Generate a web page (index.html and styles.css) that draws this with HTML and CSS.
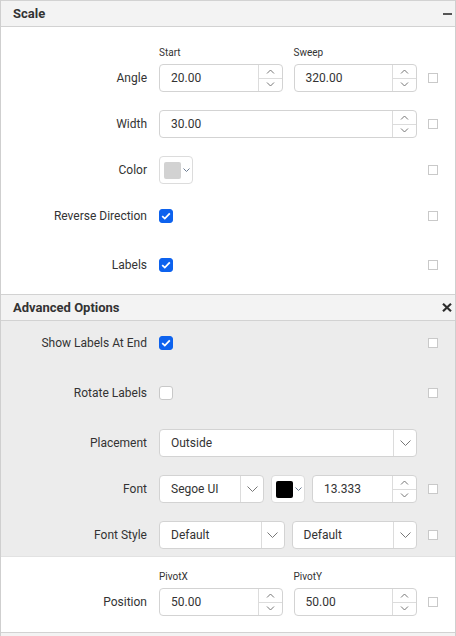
FILE: index.html
```html
<!DOCTYPE html>
<html>
<head>
<meta charset="utf-8">
<link rel="stylesheet" href="styles.css">
</head>
<body>
<div class="panel">
  <div class="sec-head">
    <span class="sec-title">Scale</span>
    <span class="icon-minus"></span>
  </div>
  <div class="sec-body">
    <div class="row row--sub">
      <div class="sublabels pair"><span>Start</span><span>Sweep</span></div>
      <div class="label">Angle</div>
      <div class="ctrl pair">
        <div class="num"><span class="val">20.00</span><span class="spin"><span class="up"><svg width="9" height="5" viewBox="0 0 9 5"><path d="M1 4.5L4.5 1L8 4.5" fill="none" stroke="#777" stroke-width="1"/></svg></span><span class="dn"><svg width="9" height="5" viewBox="0 0 9 5"><path d="M1 0.5L4.5 4L8 0.5" fill="none" stroke="#777" stroke-width="1"/></svg></span></span></div>
        <div class="num"><span class="val">320.00</span><span class="spin"><span class="up"><svg width="9" height="5" viewBox="0 0 9 5"><path d="M1 4.5L4.5 1L8 4.5" fill="none" stroke="#777" stroke-width="1"/></svg></span><span class="dn"><svg width="9" height="5" viewBox="0 0 9 5"><path d="M1 0.5L4.5 4L8 0.5" fill="none" stroke="#777" stroke-width="1"/></svg></span></span></div>
      </div>
      <div class="flag"></div>
    </div>
    <div class="row">
      <div class="label">Width</div>
      <div class="ctrl">
        <div class="num"><span class="val">30.00</span><span class="spin"><span class="up"><svg width="9" height="5" viewBox="0 0 9 5"><path d="M1 4.5L4.5 1L8 4.5" fill="none" stroke="#777" stroke-width="1"/></svg></span><span class="dn"><svg width="9" height="5" viewBox="0 0 9 5"><path d="M1 0.5L4.5 4L8 0.5" fill="none" stroke="#777" stroke-width="1"/></svg></span></span></div>
      </div>
      <div class="flag"></div>
    </div>
    <div class="row">
      <div class="label">Color</div>
      <div class="ctrl">
        <div class="colorpick"><span class="swatch swatch--gray"></span><svg width="7" height="4" viewBox="0 0 7 4"><path d="M0.5 0.5L3.5 3.5L6.5 0.5" fill="none" stroke="#6a7a90" stroke-width="1"/></svg></div>
      </div>
      <div class="flag"></div>
    </div>
    <div class="row">
      <div class="label">Reverse Direction</div>
      <div class="ctrl">
        <span class="check check--on"><svg width="10" height="8" viewBox="0 0 10 8"><path d="M1.2 4.2L3.8 6.6L8.8 1.4" fill="none" stroke="#fff" stroke-width="1.8"/></svg></span>
      </div>
      <div class="flag"></div>
    </div>
    <div class="row row--spaced">
      <div class="label">Labels</div>
      <div class="ctrl">
        <span class="check check--on"><svg width="10" height="8" viewBox="0 0 10 8"><path d="M1.2 4.2L3.8 6.6L8.8 1.4" fill="none" stroke="#fff" stroke-width="1.8"/></svg></span>
      </div>
      <div class="flag"></div>
    </div>
  </div>

  <div class="sec-head">
    <span class="sec-title">Advanced Options</span>
    <svg class="icon-close" width="10" height="9" viewBox="0 0 10 9"><path d="M1 0.8L9 8.2M9 0.8L1 8.2" stroke="#2d2d2d" stroke-width="2.2"/></svg>
  </div>
  <div class="sec-body sec-body--adv">
    <div class="row">
      <div class="label">Show Labels At End</div>
      <div class="ctrl">
        <span class="check check--on"><svg width="10" height="8" viewBox="0 0 10 8"><path d="M1.2 4.2L3.8 6.6L8.8 1.4" fill="none" stroke="#fff" stroke-width="1.8"/></svg></span>
      </div>
      <div class="flag"></div>
    </div>
    <div class="row row--spaced">
      <div class="label">Rotate Labels</div>
      <div class="ctrl">
        <span class="check"></span>
      </div>
      <div class="flag"></div>
    </div>
    <div class="row row--spaced">
      <div class="label">Placement</div>
      <div class="ctrl">
        <div class="select"><span class="val">Outside</span><span class="arrow"><svg width="11" height="6" viewBox="0 0 11 6"><path d="M0.5 0.5L5.5 5.5L10.5 0.5" fill="none" stroke="#777" stroke-width="1"/></svg></span></div>
      </div>
    </div>
    <div class="row">
      <div class="label">Font</div>
      <div class="ctrl font-grid">
        <div class="select"><span class="val">Segoe UI</span><span class="arrow"><svg width="11" height="6" viewBox="0 0 11 6"><path d="M0.5 0.5L5.5 5.5L10.5 0.5" fill="none" stroke="#777" stroke-width="1"/></svg></span></div>
        <div class="colorpick"><span class="swatch swatch--black"></span><svg width="7" height="4" viewBox="0 0 7 4"><path d="M0.5 0.5L3.5 3.5L6.5 0.5" fill="none" stroke="#6a7a90" stroke-width="1"/></svg></div>
        <div class="num"><span class="val">13.333</span><span class="spin"><span class="up"><svg width="9" height="5" viewBox="0 0 9 5"><path d="M1 4.5L4.5 1L8 4.5" fill="none" stroke="#777" stroke-width="1"/></svg></span><span class="dn"><svg width="9" height="5" viewBox="0 0 9 5"><path d="M1 0.5L4.5 4L8 0.5" fill="none" stroke="#777" stroke-width="1"/></svg></span></span></div>
      </div>
      <div class="flag"></div>
    </div>
    <div class="row">
      <div class="label">Font Style</div>
      <div class="ctrl style-grid">
        <div class="select"><span class="val">Default</span><span class="arrow"><svg width="11" height="6" viewBox="0 0 11 6"><path d="M0.5 0.5L5.5 5.5L10.5 0.5" fill="none" stroke="#777" stroke-width="1"/></svg></span></div>
        <div class="select"><span class="val">Default</span><span class="arrow"><svg width="11" height="6" viewBox="0 0 11 6"><path d="M0.5 0.5L5.5 5.5L10.5 0.5" fill="none" stroke="#777" stroke-width="1"/></svg></span></div>
      </div>
      <div class="flag"></div>
    </div>
  </div>

  <div class="sec-body sec-body--pos">
    <div class="row row--sub">
      <div class="sublabels pair"><span>PivotX</span><span>PivotY</span></div>
      <div class="label">Position</div>
      <div class="ctrl pair">
        <div class="num"><span class="val">50.00</span><span class="spin"><span class="up"><svg width="9" height="5" viewBox="0 0 9 5"><path d="M1 4.5L4.5 1L8 4.5" fill="none" stroke="#777" stroke-width="1"/></svg></span><span class="dn"><svg width="9" height="5" viewBox="0 0 9 5"><path d="M1 0.5L4.5 4L8 0.5" fill="none" stroke="#777" stroke-width="1"/></svg></span></span></div>
        <div class="num"><span class="val">50.00</span><span class="spin"><span class="up"><svg width="9" height="5" viewBox="0 0 9 5"><path d="M1 4.5L4.5 1L8 4.5" fill="none" stroke="#777" stroke-width="1"/></svg></span><span class="dn"><svg width="9" height="5" viewBox="0 0 9 5"><path d="M1 0.5L4.5 4L8 0.5" fill="none" stroke="#777" stroke-width="1"/></svg></span></span></div>
      </div>
      <div class="flag"></div>
    </div>
  </div>
  <div class="sec-head sec-head--next"></div>
</div>
</body>
</html>
```

FILE: styles.css
```css
* { box-sizing: border-box; }
html, body { margin: 0; padding: 0; background: #fff; }
body {
  font-family: Roboto, "Liberation Sans", Arial, sans-serif;
  font-size: 12px;
  color: #333;
}
.panel {
  width: 456px;
  height: 636px;
  overflow: hidden;
  border-left: 1px solid #cfcfcf;
  border-right: 1px solid #cfcfcf;
}
.sec-head {
  height: 27px;
  border-top: 1px solid #d2d2d2;
  border-bottom: 1px solid #d2d2d2;
  background: #f3f3f3;
  display: flex;
  align-items: center;
  justify-content: space-between;
  padding: 0 2px 0 12px;
}
.sec-title {
  font-weight: 700;
  font-size: 13px;
  color: #333;
  margin-top: -1px;
}
.icon-minus {
  width: 9px;
  height: 2px;
  background: #555;
  margin-top: 1px;
  margin-right: 1px;
}
.icon-close { margin-right: 1px; margin-top: -1px; }
.sec-body {
  display: flex;
  flex-direction: column;
  gap: 18px;
  padding: 19px 0 15px;
}
.sec-body--adv {
  background: #ececec;
  padding: 8px 0 7px;
  border-bottom: 1px solid #e2e2e2;
}
.sec-body--adv .row--spaced { margin-top: 4px; }
.sec-body--pos {
  padding: 13px 0 16px;
}
.sec-head--next { height: 30px; border-bottom: none; }
.row {
  display: grid;
  grid-template-columns: 146px 258px 10px;
  column-gap: 12px;
  align-items: center;
  height: 28px;
}
.row--spaced { margin-top: 3px; }
.row--sub {
  grid-template-rows: 14px 28px;
  row-gap: 4px;
  height: auto;
}
.row--sub .sublabels { grid-row: 1; grid-column: 2; }
.row--sub .label, .row--sub .ctrl, .row--sub .flag { grid-row: 2; }
.row--sub .label { grid-column: 1; }
.row--sub .ctrl { grid-column: 2; }
.row--sub .flag { grid-column: 3; }
.label {
  text-align: right;
  color: #333;
  white-space: nowrap;
}
.ctrl { display: flex; align-items: center; }
.pair { display: grid; grid-template-columns: 1fr 1fr; column-gap: 11px; }
.sublabels { font-size: 10px; line-height: 14px; color: #333; }
.font-grid { display: grid; grid-template-columns: 1fr 34px 1fr; column-gap: 7px; }
.style-grid { display: grid; grid-template-columns: 1fr 1fr; column-gap: 7px; }
.flag {
  width: 10px;
  height: 10px;
  border: 1px solid #c9c9c9;
  background: #fff;
  margin-left: -1px;
}
.num, .select {
  height: 28px;
  width: 100%;
  border: 1px solid #d3d3d3;
  border-radius: 4px;
  background: #fff;
  display: flex;
  align-items: stretch;
}
.val {
  flex: 1;
  display: flex;
  align-items: center;
  padding-left: 11px;
  color: #333;
  font-size: 12px;
}
.spin {
  width: 24px;
  border-left: 1px solid #dcdcdc;
  display: flex;
  flex-direction: column;
}
.spin .up, .spin .dn {
  flex: 1;
  display: flex;
  align-items: center;
  justify-content: center;
}
.spin .up { border-bottom: 1px solid #dcdcdc; }
.arrow {
  width: 23px;
  border-left: 1px solid #dcdcdc;
  display: flex;
  align-items: center;
  justify-content: center;
}
.colorpick {
  width: 34px;
  height: 28px;
  border: 1px solid #dcdcdc;
  border-radius: 4px;
  background: #fff;
  display: flex;
  align-items: center;
  padding-left: 4px;
  gap: 2px;
}
.swatch {
  width: 17px;
  height: 17px;
  border-radius: 2px;
}
.swatch--gray { background: #d2d2d2; }
.swatch--black { background: #000; }
.check {
  width: 14px;
  height: 14px;
  border-radius: 3px;
  border: 1px solid #c8c8c8;
  background: #fff;
  display: flex;
  align-items: center;
  justify-content: center;
}
.check--on {
  background: #0d62ee;
  border-color: #0d62ee;
}
```
